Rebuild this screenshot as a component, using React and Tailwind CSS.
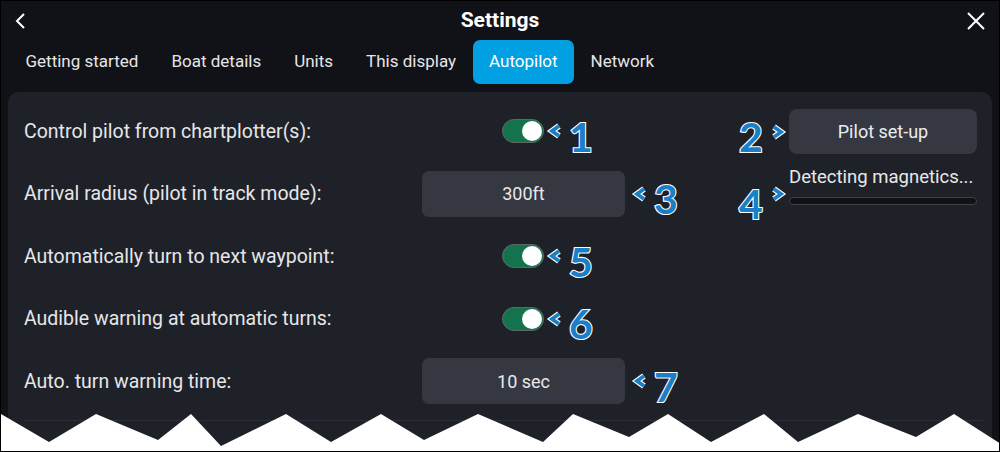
import React from 'react';

const tabs = ['Getting started', 'Boat details', 'Units', 'This display', 'Autopilot', 'Network'];

const Chevron = ({ dir = 'left' }) => (
    <svg width="15" height="16" viewBox="0 0 15 16" className="shrink-0 overflow-visible">
        <polyline
            points={dir === 'left' ? '11,3 4,8 11,13' : '4,3 11,8 4,13'}
            fill="none" stroke="#ffffff" strokeWidth="6" strokeLinejoin="miter" strokeLinecap="butt"
        />
        <polyline
            points={dir === 'left' ? '11,3 4,8 11,13' : '4,3 11,8 4,13'}
            fill="none" stroke="#1b7fc8" strokeWidth="3.8" strokeLinejoin="miter" strokeLinecap="butt"
        />
    </svg>
);

const Num = ({ n }) => (
    <svg width="26" height="44" viewBox="0 0 26 44" className="shrink-0 overflow-visible">
        <text
            x="13" y="41" textAnchor="middle" fontSize="41" fontWeight="700"
            fontFamily="Lato, 'Open Sans', sans-serif"
            fill="#1b7fc8" stroke="#ffffff" strokeWidth="2.2" paintOrder="stroke"
        >{n}</text>
    </svg>
);

const Toggle = () => (
    <div className="flex h-[24px] w-[42px] items-center justify-end rounded-full border border-[#5d6a64] bg-[#14734d] pr-[1px]">
        <div className="h-[20px] w-[20px] rounded-full bg-white" />
    </div>
);

const Field = ({ value }) => (
    <div className="flex h-[46px] w-[203px] items-center justify-center rounded-[7px] bg-[#353841] text-[18px] text-[#e8e8ea]">
        {value}
    </div>
);

const rows = [
    { label: 'Control pilot from chartplotter(s):', type: 'toggle', n: 1 },
    { label: 'Arrival radius (pilot in track mode):', type: 'field', value: '300ft', n: 3 },
    { label: 'Automatically turn to next waypoint:', type: 'toggle', n: 5 },
    { label: 'Audible warning at automatic turns:', type: 'toggle', n: 6 },
    { label: 'Auto. turn warning time:', type: 'field', value: '10 sec', n: 7 },
];

const App = () => {
    return (
        <div className="relative h-[452px] w-[1000px] overflow-hidden border border-black bg-[#111217] font-['Roboto',sans-serif] text-[#e8e8ea]">
            {/* header */}
            <div className="flex h-[39px] items-center justify-between px-[13px]">
                <svg width="14" height="18" viewBox="0 0 14 18">
                    <polyline points="10,2 3,9 10,16" fill="none" stroke="#ffffff" strokeWidth="2" />
                </svg>
                <div className="pl-[6px] text-[21px] font-bold text-white">Settings</div>
                <svg width="20" height="20" viewBox="0 0 20 20">
                    <path d="M2 2 L18 18 M18 2 L2 18" stroke="#ffffff" strokeWidth="2" />
                </svg>
            </div>

            {/* tabs */}
            <div className="flex h-[44px] items-center pl-[8px]">
                {tabs.map(t => (
                    <div
                        key={t}
                        className={`flex h-[44px] items-center rounded-[7px] px-[16.5px] text-[17px] ${t === 'Autopilot' ? 'bg-[#00a0e2] text-white' : 'text-[#e6e6e8]'}`}
                    >
                        {t}
                    </div>
                ))}
            </div>

            {/* panel */}
            <div className="mx-[7px] mt-[8px] h-[400px] rounded-[11px] bg-[#1f2129]">
                <div className="flex">
                    <div className="w-[730px] pt-[8px] pl-[16px]">
                        {rows.map(r => (
                            <div key={r.n} className="flex h-[62.5px] items-center">
                                <div className="w-[398px] text-[19.5px] text-[#e6e6e8]">{r.label}</div>
                                {r.type === 'toggle' ? (
                                    <div className="flex items-center pl-[80px]">
                                        <Toggle />
                                        <div className="ml-[4px] flex items-center">
                                            <Chevron dir="left" />
                                            <div className="ml-[5px] mt-[3px]"><Num n={r.n} /></div>
                                        </div>
                                    </div>
                                ) : (
                                    <div className="flex items-center">
                                        <Field value={r.value} />
                                        <div className="ml-[8px] flex items-center">
                                            <Chevron dir="left" />
                                            <div className="ml-[5px] mt-[3px]"><Num n={r.n} /></div>
                                        </div>
                                    </div>
                                )}
                            </div>
                        ))}
                        <div className="mt-[7px] mr-[-247px] h-px bg-[#2c2f37]" />
                    </div>

                    <div className="flex-1 pt-[16px] pr-[15px]">
                        <div className="flex items-center">
                            <div className="flex w-[51px] items-center">
                                <div className="mt-[3px]"><Num n={2} /></div>
                                <div className="ml-[6px]"><Chevron dir="right" /></div>
                            </div>
                            <div className="flex h-[45px] flex-1 items-center justify-center rounded-[8px] bg-[#353841] text-[18px] text-[#ececee]">
                                Pilot set-up
                            </div>
                        </div>
                        <div className="mt-[12px] flex">
                            <div className="flex w-[51px] items-center pt-[8px]">
                                <div className="mt-[3px]"><Num n={4} /></div>
                                <div className="ml-[6px] -mt-[10px]"><Chevron dir="right" /></div>
                            </div>
                            <div className="flex-1">
                                <div className="whitespace-nowrap text-[18.5px] leading-[20px] text-[#e8e8ea]">Detecting magnetics...</div>
                                <div className="mt-[10px] h-[8px] rounded-full border border-[#3d4048] bg-[#101115]" />
                            </div>
                        </div>
                    </div>
                </div>
            </div>

            {/* torn edge */}
            <svg className="absolute bottom-0 left-0" width="1000" height="42" viewBox="0 410 1000 42">
                <polygon
                    points="0,415 48,443 95,415 157,441 190,415 220,447 285,415 330,443 380,415 423,441 477,415 542,443 572,415 628,438 667,415 710,443 763,415 797,443 857,415 915,438 953,415 1000,445 1000,452 0,452"
                    fill="#ffffff"
                />
            </svg>
        </div>
    );
};

export default App;
